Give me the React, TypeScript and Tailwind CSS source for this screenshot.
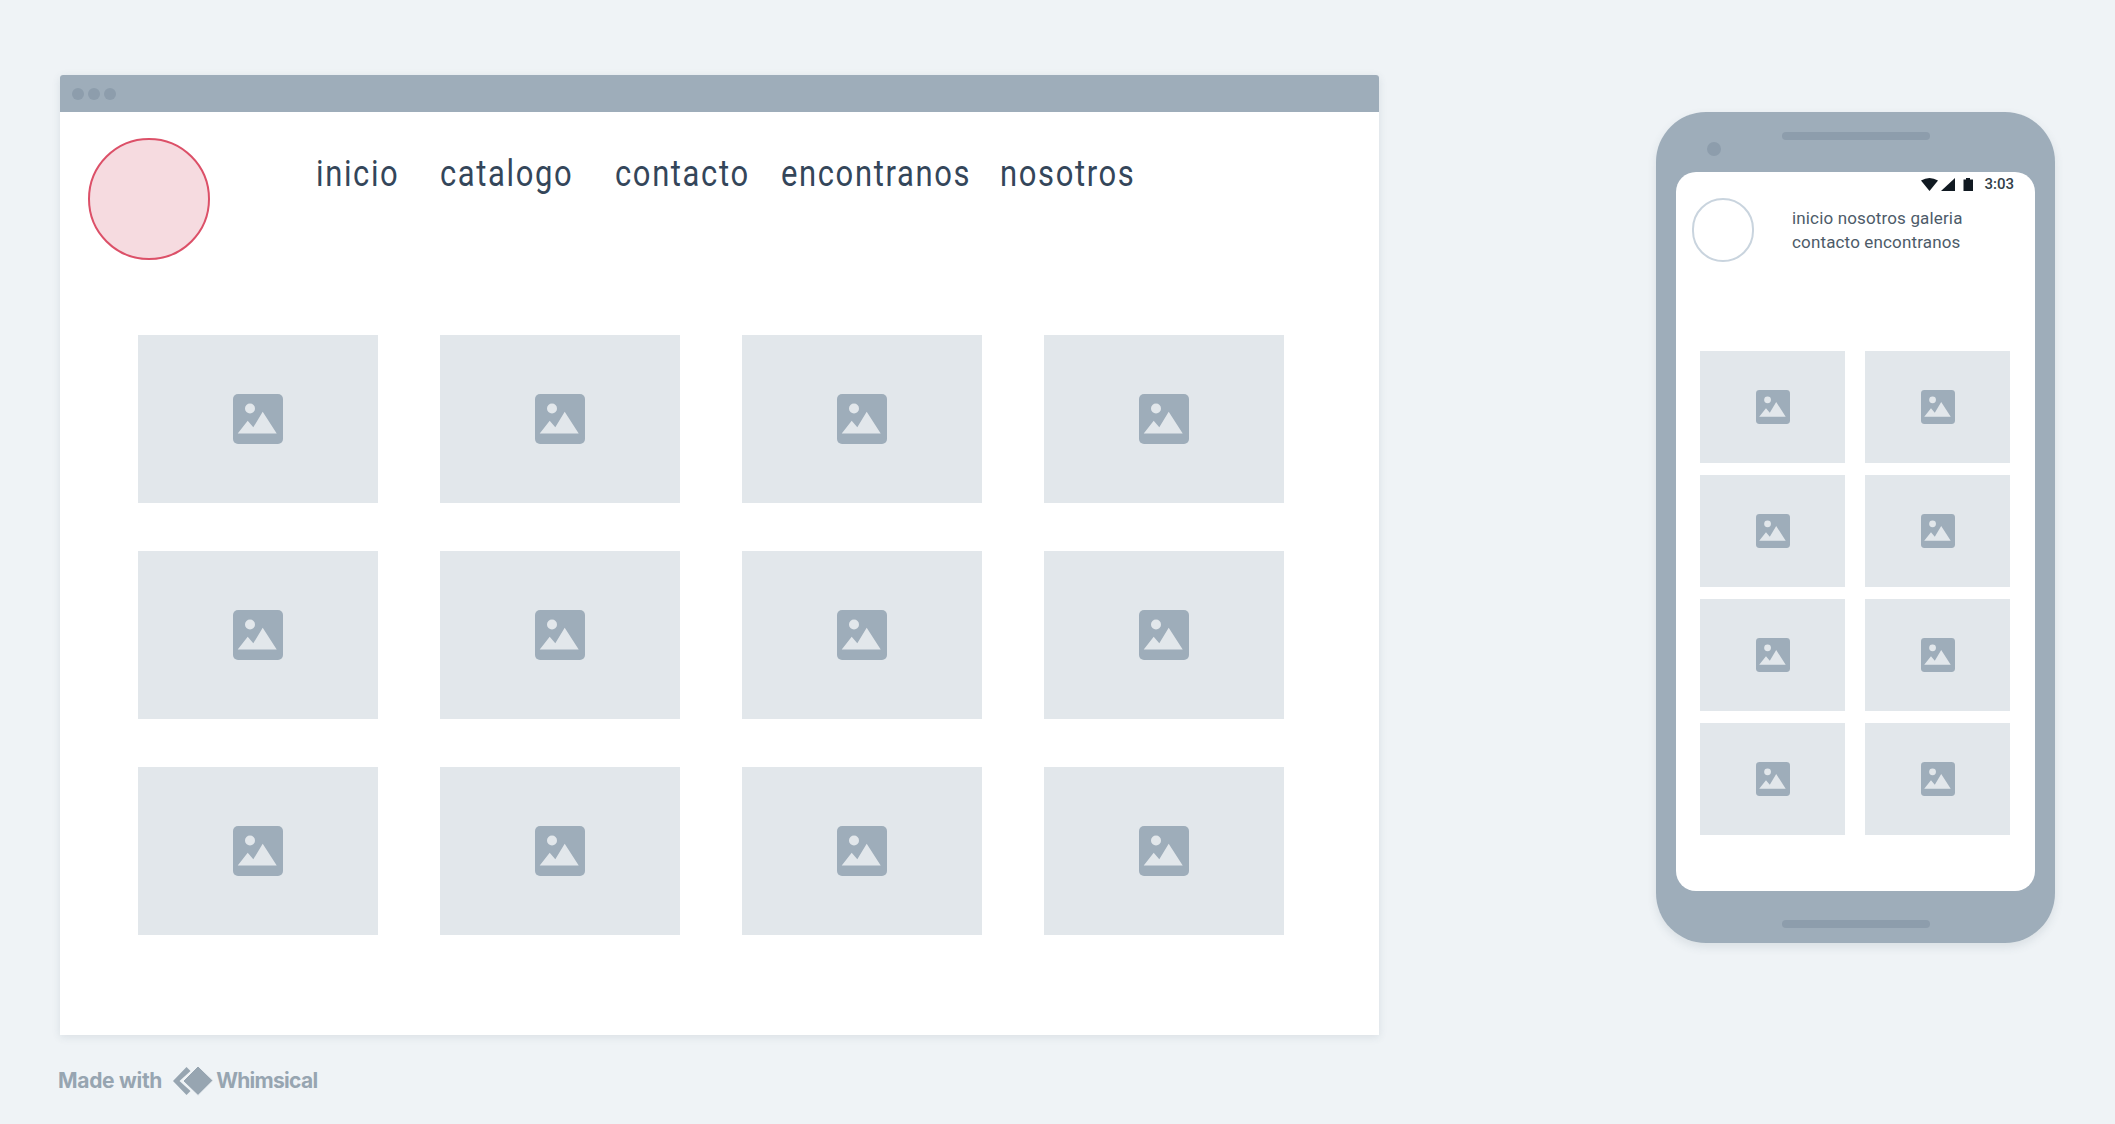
const ImageIcon = ({ s }: { s: number }) => (
  <svg width={s} height={s} viewBox="0 0 50 50" className="block">
    <rect x="0" y="0" width="50" height="50" rx="5" fill="#9eadba" />
    <circle cx="17" cy="14.5" r="5" fill="#e2e7eb" />
    <path d="M4.7 39.5 L14.7 26.7 L20.3 33.3 L29.7 17.7 L43.7 39.5 Z" fill="#e2e7eb" />
  </svg>
);

const Tile = ({ w, h, s }: { w: string; h: string; s: number }) => (
  <div className={`${w} ${h} bg-[#e2e7eb] flex items-center justify-center`}>
    <ImageIcon s={s} />
  </div>
);

const Nav = ["inicio", "catalogo", "contacto", "encontranos", "nosotros"];
const navClass = ["w-[124px]", "w-[175px]", "w-[166px]", "w-[219px]", "w-auto"];

export default function App() {
  return (
    <div className="w-[2115px] h-[1124px] bg-[#eff3f6] overflow-hidden flex justify-between pl-[60px] pr-[60px] pt-[75px] font-['Roboto',sans-serif]">
      <div className="flex flex-col">
        <div className="w-[1319px] h-[960px] bg-white rounded-t-[3px] shadow-[0_2px_8px_rgba(60,80,100,0.12)] flex flex-col">
          <div className="h-[37px] bg-[#9eadba] rounded-t-[3px] flex items-center gap-1 pl-3 shrink-0">
            <div className="w-3 h-3 rounded-full bg-[#8d9dac]" />
            <div className="w-3 h-3 rounded-full bg-[#8d9dac]" />
            <div className="w-3 h-3 rounded-full bg-[#8d9dac]" />
          </div>
          <div className="flex h-[223px] pl-7 pt-[26px] shrink-0">
            <div className="w-[122px] h-[122px] rounded-full border-[2.5px] border-[#dc5068] bg-[#f6dbe0] shrink-0" />
            <div className="flex ml-[106px] mt-[14px] h-[44px] items-center text-[36px] tracking-[1.9px] text-[#34465a]">
              {Nav.map((n, i) => (
                <span key={n} className={`${navClass[i]} whitespace-nowrap [transform:scaleX(0.86)] origin-left`}>{n}</span>
              ))}
            </div>
          </div>
          <div className="grid grid-cols-[repeat(4,240px)] gap-x-[62px] gap-y-[48px] pl-[78px]">
            {Array.from({ length: 12 }).map((_, i) => (
              <Tile key={i} w="w-[240px]" h="h-[168px]" s={50} />
            ))}
          </div>
        </div>
        <div className="flex items-center mt-[30px] -ml-[2px] text-[21px] font-bold text-[#97a5b1] font-['Inter',sans-serif]">
          <span className="tracking-[-0.3px]">Made with</span>
          <svg width="42" height="30" viewBox="0 0 42 30" className="ml-[10px] mr-[2px]">
            <path d="M14.5 1 L1 15 L14.5 29 L18.5 25 L7.5 15 L18.5 5 Z" fill="#97a5b1" />
            <path d="M26 0 L41 14.5 L26 29.5 L11 15 Z" fill="#97a5b1" stroke="#eff3f6" strokeWidth="1" />
          </svg>
          <span className="tracking-[-0.7px]">Whimsical</span>
        </div>
      </div>

      <div className="relative w-[399px] h-[831px] mt-[37px] rounded-[50px] bg-[#9eadba] shadow-[0_4px_10px_rgba(60,80,100,0.12)] flex flex-col items-center">
        <div className="w-full h-[60px] relative shrink-0">
          <div className="absolute left-[51px] top-[30px] w-[14px] h-[14px] rounded-full bg-[#8d9dac]" />
          <div className="absolute left-[126px] top-5 w-[148px] h-2 rounded-full bg-[#8d9dac]" />
        </div>
        <div className="w-[359px] h-[719px] bg-white rounded-[20px] flex flex-col pl-6 shrink-0">
          <div className="relative h-[179px] shrink-0">
            <div className="absolute right-[21px] top-[5px] flex items-center gap-[11px]">
              <svg width="52" height="13" viewBox="0 0 52 13">
                <path d="M0 2.5 Q8.5 -2.5 17 2.5 L8.5 13 Z" fill="#111a22" />
                <path d="M20 13 L34 13 L34 0 Z" fill="#111a22" />
                <path d="M42.5 1.5 H45 V0 H49 V1.5 H52 V13 H42.5 Z" fill="#111a22" />
              </svg>
              <span className="text-[15px] leading-[14px] font-medium text-[#333f4a]">3:03</span>
            </div>
            <div className="absolute -left-2 top-[26px] w-[62px] h-[64px] rounded-full border-2 border-[#c9d4de]" />
            <div className="absolute left-[92px] top-[34px] text-[17px] leading-6 tracking-[0.15px] text-[#4d5b69] whitespace-nowrap">
              inicio nosotros galeria
              <br />
              contacto encontranos
            </div>
          </div>
          <div className="grid grid-cols-[repeat(2,145px)] gap-x-5 gap-y-3">
            {Array.from({ length: 8 }).map((_, i) => (
              <Tile key={i} w="w-[145px]" h="h-[112px]" s={34} />
            ))}
          </div>
        </div>
        <div className="mt-[29px] w-[148px] h-2 rounded-full bg-[#8d9dac]" />
      </div>
    </div>
  );
}
